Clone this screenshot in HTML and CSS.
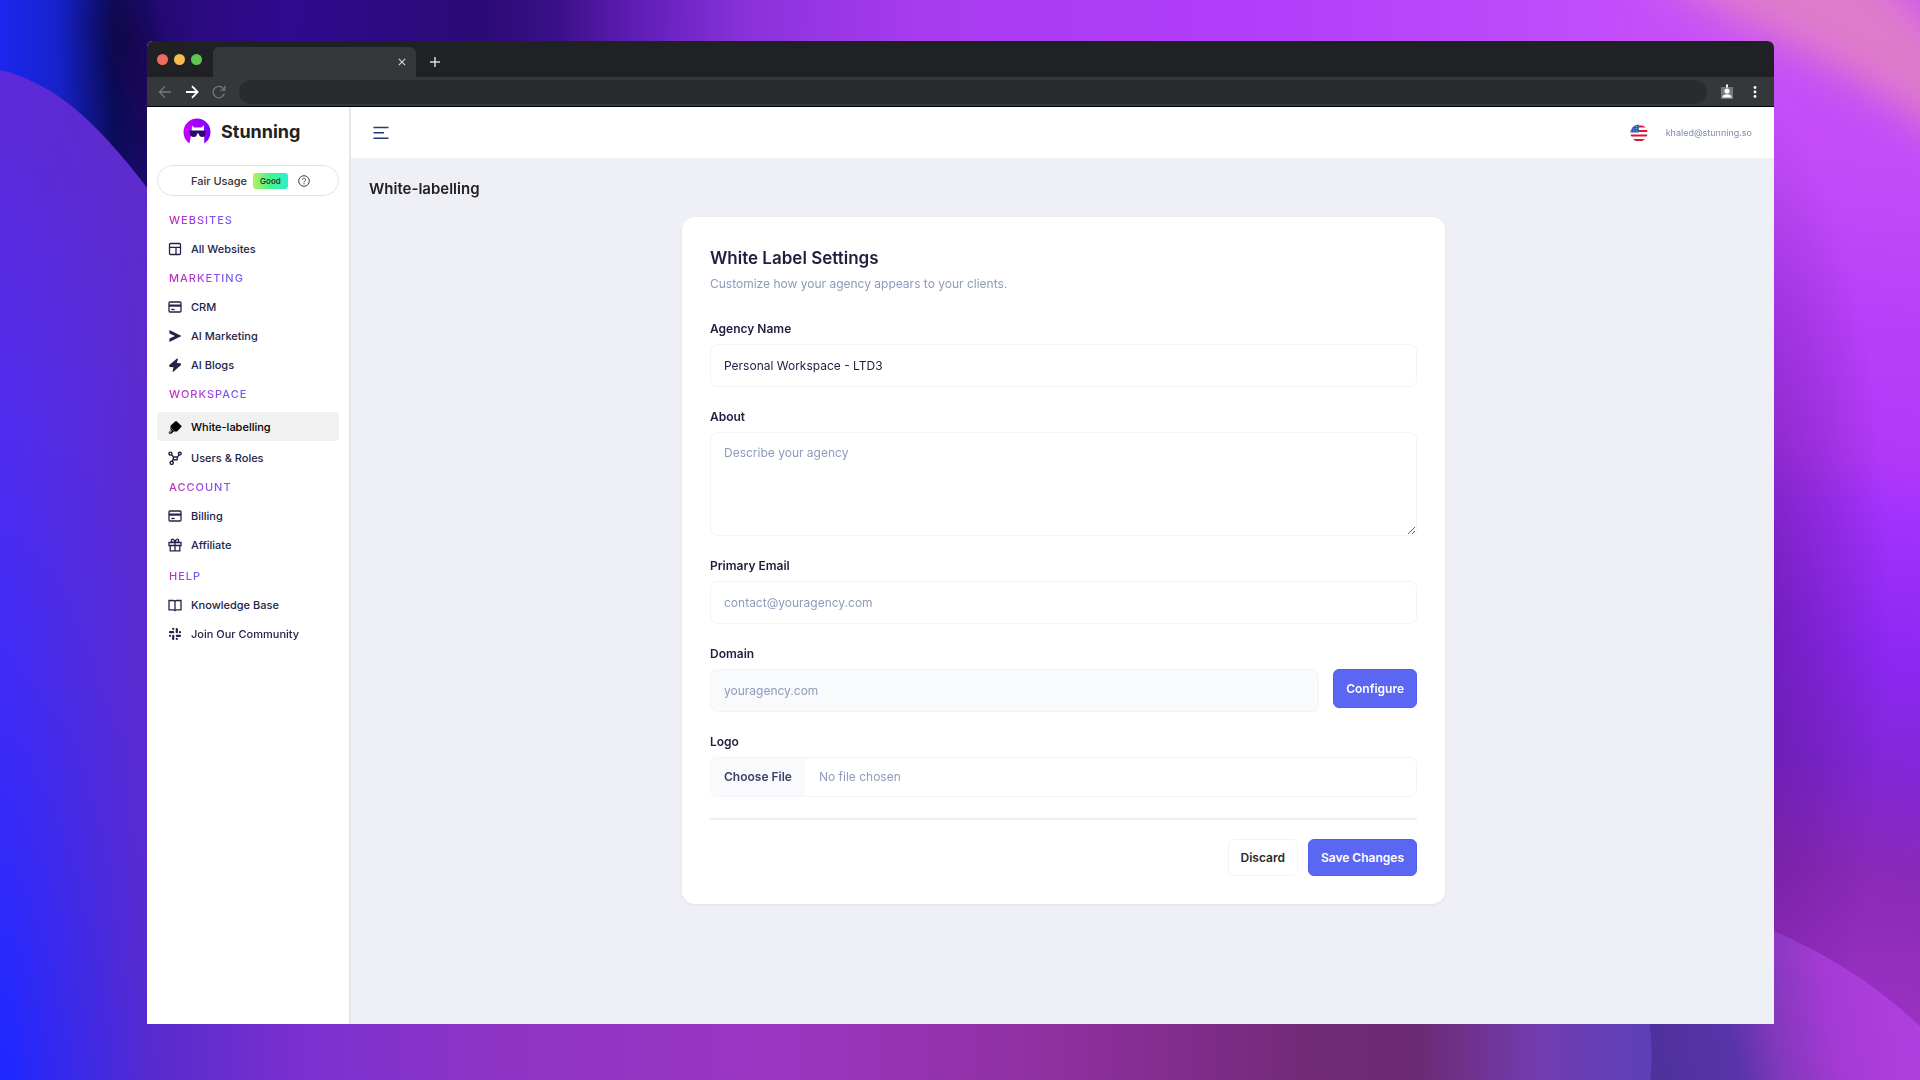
FILE: index.html
```html
<!DOCTYPE html>
<html lang="en">
<head>
    <meta charset="UTF-8">
    <meta name="viewport" content="width=device-width, initial-scale=1.0">
    <title>White-labelling - Stunning</title>
    <link rel="stylesheet" href="styles.css">
</head>
<body>
    <svg class="wallpaper" viewBox="0 0 1920 1080" preserveAspectRatio="none" aria-hidden="true">
        <defs>
            <linearGradient id="wpTop" gradientUnits="userSpaceOnUse" x1="0" y1="0" x2="1920" y2="20">
                <stop offset="0" stop-color="#1c27ee"/>
                <stop offset=".03" stop-color="#1722cc"/>
                <stop offset=".06" stop-color="#0d0d60"/>
                <stop offset=".085" stop-color="#280a78"/>
                <stop offset=".15" stop-color="#300a90"/>
                <stop offset=".25" stop-color="#2a0a74"/>
                <stop offset=".29" stop-color="#3a1088"/>
                <stop offset=".33" stop-color="#5e1db5"/>
                <stop offset=".39" stop-color="#8a32dc"/>
                <stop offset=".48" stop-color="#a83bf0"/>
                <stop offset=".65" stop-color="#b23dfb"/>
                <stop offset=".82" stop-color="#c04cfb"/>
                <stop offset=".9" stop-color="#c852f6"/>
            </linearGradient>
            <linearGradient id="wpRight" gradientUnits="userSpaceOnUse" x1="1900" y1="0" x2="1760" y2="1080">
                <stop offset="0" stop-color="#c852f6"/>
                <stop offset=".17" stop-color="#c24bf8"/>
                <stop offset=".3" stop-color="#b83ffa"/>
                <stop offset=".42" stop-color="#b238f8"/>
                <stop offset=".47" stop-color="#a232fc"/>
                <stop offset=".6" stop-color="#8c28f2"/>
                <stop offset=".7" stop-color="#8227d8"/>
                <stop offset=".8" stop-color="#8a2ab8"/>
                <stop offset="1" stop-color="#a234c8"/>
            </linearGradient>
            <radialGradient id="wpShade">
                <stop offset="0" stop-color="#501080" stop-opacity=".6"/>
                <stop offset="1" stop-color="#501080" stop-opacity="0"/>
            </radialGradient>
            <linearGradient id="wpLeft" gradientUnits="userSpaceOnUse" x1="0" y1="130" x2="40" y2="1080">
                <stop offset="0" stop-color="#5c2ad8"/>
                <stop offset=".3" stop-color="#502cee"/>
                <stop offset=".6" stop-color="#3f2bf6"/>
                <stop offset="1" stop-color="#1f28ff"/>
            </linearGradient>
            <linearGradient id="wpLeftShade" gradientUnits="userSpaceOnUse" x1="10" y1="0" x2="155" y2="0">
                <stop offset="0" stop-color="#5f2bc8" stop-opacity="0"/>
                <stop offset="1" stop-color="#5f2bc8" stop-opacity=".9"/>
            </linearGradient>
            <linearGradient id="wpBottom" gradientUnits="userSpaceOnUse" x1="0" y1="0" x2="1920" y2="0">
                <stop offset="0" stop-color="#592bce"/>
                <stop offset=".083" stop-color="#592bce"/>
                <stop offset=".16" stop-color="#7c30d0"/>
                <stop offset=".25" stop-color="#8c34c6"/>
                <stop offset=".4" stop-color="#9b36c2"/>
                <stop offset=".55" stop-color="#8f30a0"/>
                <stop offset=".68" stop-color="#722a78"/>
                <stop offset=".74" stop-color="#6d2a74"/>
                <stop offset=".8" stop-color="#713cb0"/>
                <stop offset=".858" stop-color="#5e40b8"/>
                <stop offset=".9" stop-color="#4b2c90"/>
            </linearGradient>
            <linearGradient id="wpBlob" gradientUnits="userSpaceOnUse" x1="1640" y1="1060" x2="1920" y2="1010">
                <stop offset="0" stop-color="#4d319a"/>
                <stop offset=".33" stop-color="#5834a8"/>
                <stop offset=".48" stop-color="#8238bc"/>
                <stop offset=".7" stop-color="#a63ad6"/>
                <stop offset="1" stop-color="#b23fe0"/>
            </linearGradient>
            <filter id="wpSoft" x="-60%" y="-60%" width="220%" height="220%">
                <feGaussianBlur stdDeviation="20"/>
            </filter>
        </defs>
        <rect width="1920" height="1080" fill="url(#wpTop)"/>
        <path d="M1760 0H1920V1080H1760Z" fill="url(#wpRight)"/>
        <ellipse cx="1730" cy="620" rx="160" ry="540" fill="url(#wpShade)"/>
        <path d="M1640-40C1740 30 1850 60 1960 150L1970 60C1930 20 1900-10 1860-50Z" fill="#e07cca" filter="url(#wpSoft)"/>
        <path d="M0 1000H1774V1080H0Z" fill="url(#wpBottom)"/>
        <path d="M1650 1080Q1655 1050 1646 1000L1700 905C1770 925 1850 960 1920 1026V1080Z" fill="url(#wpBlob)"/>
        <path d="M95 0H140C155 60 160 120 165 220C145 160 115 90 95 0Z" fill="#080628" opacity=".5" filter="url(#wpSoft)"/>
        <path d="M0 70C60 85 100 125 160 205V1080H0Z" fill="url(#wpLeft)"/>
        <path d="M0 70C60 85 100 125 160 205V1080H0Z" fill="url(#wpLeftShade)"/>
    </svg>

    <div class="browser">
        <div class="tab-bar">
            <div class="lights">
                <span class="light red"></span>
                <span class="light yellow"></span>
                <span class="light green"></span>
            </div>
            <div class="tab">
                <button class="chrome-btn" type="button" aria-label="Close tab">
                    <svg width="8" height="8" viewBox="0 0 8 8" fill="none" stroke="#d5d7d9" stroke-width="1.100"><path d="M.8.8l6.4 6.4M7.2.8L.8 7.2"/></svg>
                </button>
            </div>
            <button class="chrome-btn new-tab" type="button" aria-label="New tab">
                <svg width="10" height="10" viewBox="0 0 10 10" fill="none" stroke="#d5d7d9" stroke-width="1.5"><path d="M5 0v10M0 5h10"/></svg>
            </button>
        </div>
        <div class="toolbar">
            <button class="chrome-btn" type="button" aria-label="Back">
                <svg width="14" height="14" viewBox="0 0 14 14" fill="none" stroke="#75797c" stroke-width="1.3"><path d="M13 7H1.8M7 1.4L1.4 7 7 12.6"/></svg>
            </button>
            <button class="chrome-btn" type="button" aria-label="Forward">
                <svg width="14" height="14" viewBox="0 0 14 14" fill="none" stroke="#fff" stroke-width="1.8"><path d="M1 7h11M7 1.2L12.6 7 7 12.8"/></svg>
            </button>
            <button class="chrome-btn" type="button" aria-label="Reload">
                <svg width="14" height="14" viewBox="0 0 14 14" fill="none" stroke="#75797c" stroke-width="1.3"><path d="M12.4 8.4A5.7 5.7 0 1 1 11.2 3.4L12.8 5M12.8.8V5.2H8.4"/></svg>
            </button>
            <input class="address" type="text" aria-label="Address">
            <button class="chrome-btn" type="button" aria-label="Profile">
                <svg width="14" height="16" viewBox="0 0 14 16"><path fill="#75797c" d="M1 3h12v12H1z"/><path fill="#fff" d="M6 .5h2v3H6z"/><circle cx="7" cy="7" r="2.600" fill="#fff"/><path fill="#fff" d="M2.300 13.500c.2-2.200 2-3.200 4.700-3.200s4.500 1 4.700 3.200z"/></svg>
            </button>
            <button class="chrome-btn" type="button" aria-label="Menu">
                <svg width="4" height="14" viewBox="0 0 4 14" fill="#fff"><circle cx="2" cy="2.500" r="1.400"/><circle cx="2" cy="7" r="1.400"/><circle cx="2" cy="11.500" r="1.400"/></svg>
            </button>
        </div>

        <div class="app">
            <aside class="sidebar">
                <a class="brand" href="#">
                    <svg width="28" height="28" viewBox="0 0 28 28">
                        <defs>
                            <linearGradient id="brandGrad" x1="0" y1="0" x2="1" y2="0">
                                <stop offset="0" stop-color="#c800ff"/>
                                <stop offset="1" stop-color="#7a00ff"/>
                            </linearGradient>
                        </defs>
                        <path fill="url(#brandGrad)" d="M14 .5A13.500 13.500 0 0 0 .5 14c0 4.900 2.400 9 6 11.500L9 19h12v6.500c4-2.300 6.500-6.500 6.500-11.500A13.500 13.500 0 0 0 14 .5z"/>
                        <path fill="#fff" d="M9 7.500l2 2h7.500l2.300-2.500.4 7.500v12h-2l-.4-5.500h-8L8 26l-1.500-.800L8.600 14z"/>
                        <path fill="#2a0a6b" d="M6.500 12.500h16v2.200c0 3.300-1 4.300-3.200 4.300-2 0-3.300-1-3.600-3.500h-1.500c-.3 2.500-1.300 3.500-3.500 3.500-2.500 0-3.600-1.400-3.700-4.200z"/>
                    </svg>
                    <span>Stunning</span>
                </a>
                <div class="usage">
                    <span>Fair Usage</span>
                    <span class="badge">Good</span>
                    <svg width="12" height="12" viewBox="0 0 12 12" fill="none" stroke="#3f4254"><circle cx="6" cy="6" r="5.300"/><path d="M4.400 4.800a1.600 1.600 0 1 1 2.400 1.400c-.6.300-.8.500-.8 1.100M6 8.200v1.100"/></svg>
                </div>
                <nav>
                    <h2 class="nav-title"><span>WEBSITES</span></h2>
                    <a class="nav-item" href="#">
                        <svg viewBox="0 0 14 14" fill="none" stroke="currentColor" stroke-width="1.300"><rect x="1.500" y="1.500" width="11" height="11" rx="1"/><path d="M1.500 5.300h11M8 5.300v7.200"/></svg>
                        All Websites
                    </a>
                    <h2 class="nav-title"><span>MARKETING</span></h2>
                    <a class="nav-item" href="#">
                        <svg viewBox="0 0 14 14" fill="none" stroke="currentColor" stroke-width="1.300"><rect x="1" y="2" width="12" height="10" rx="1"/><path d="M1 5.600h12" stroke-width="2.200"/><path d="M3.200 9.500h3.500"/></svg>
                        CRM
                    </a>
                    <a class="nav-item" href="#">
                        <svg viewBox="0 0 14 14" fill="currentColor"><path d="M1.300 1L13.500 7 1.300 13l.2-3.500L7 7 1.500 4.500z"/></svg>
                        AI Marketing
                    </a>
                    <a class="nav-item" href="#">
                        <svg viewBox="0 0 14 14" fill="currentColor"><path d="M9 .4L1 7.300l.6 1.600 4 .3-1.200 4.300 1 .3 7.800-7-.6-1.600-3.800-.3L10 1z"/></svg>
                        AI Blogs
                    </a>
                    <h2 class="nav-title"><span>WORKSPACE</span></h2>
                    <a class="nav-item active" href="#">
                        <svg viewBox="0 0 14 14" fill="currentColor"><path d="M7.300 1.200a1 1 0 0 1 1.300 0l4.700 4.600a1 1 0 0 1 0 1.300L9 11.500H6.600L2.500 7.300V5.700z"/><path d="M2.300 7.500l4 4-1.300.6-1.200 1.400L1 13.800.7 12l2-1.200z"/><path d="M1.500 12.700l2.400-2" stroke="#f1f1f1" stroke-width=".9"/></svg>
                        White-labelling
                    </a>
                    <a class="nav-item" href="#">
                        <svg viewBox="0 0 14 14" fill="none" stroke="currentColor" stroke-width="1.400"><circle cx="2.400" cy="2.600" r="1.500"/><circle cx="11.800" cy="2.600" r="1.400"/><circle cx="3.700" cy="11.800" r="1.600"/><path d="M3.500 3.800L5.600 6l4-.2 1.400-1.900M5.600 6L5 8.500l-.8 1.800M9.600 5.800L9 8.800 5 8.500"/></svg>
                        Users &amp; Roles
                    </a>
                    <h2 class="nav-title"><span>ACCOUNT</span></h2>
                    <a class="nav-item" href="#">
                        <svg viewBox="0 0 14 14" fill="none" stroke="currentColor" stroke-width="1.300"><rect x="1" y="2" width="12" height="10" rx="1"/><path d="M1 5.600h12" stroke-width="2.200"/><path d="M3.200 9.500h3.500"/></svg>
                        Billing
                    </a>
                    <a class="nav-item" href="#">
                        <svg viewBox="0 0 14 14" fill="none" stroke="currentColor" stroke-width="1.300"><path d="M1 4.500h12v3H1zM2.200 7.500v5.300h9.600V7.500M7 4.500v8.300M7 4.500C3.800 4.400 3 3.400 3.300 2.200 3.800.4 6.500.8 7 4.500 7.500.8 10.200.4 10.700 2.200c.3 1.200-.5 2.200-3.700 2.300z"/></svg>
                        Affiliate
                    </a>
                    <div class="help">
                        <h2 class="nav-title"><span>HELP</span></h2>
                        <a class="nav-item" href="#">
                            <svg viewBox="0 0 14 14" fill="none" stroke="currentColor" stroke-width="1.300"><path d="M1 2.500h4.500c1 0 1.500.6 1.500 1.500 0-.9.500-1.500 1.500-1.500H13v9.300H8.300c-.8 0-1.300.4-1.300 1.400 0-1-.5-1.400-1.300-1.400H1zM7 4v9"/></svg>
                            Knowledge Base
                        </a>
                        <a class="nav-item" href="#">
                            <svg viewBox="0 0 14 14" fill="none" stroke="currentColor" stroke-width="2.200" stroke-linecap="round"><path d="M5.200 1.900v.1M5.200 5.200H2M8.800 2v3.200M12 5.200h-.1M8.800 8.800H12M8.800 12v-.1M5.200 8.800V12M2 8.800h.1"/></svg>
                            Join Our Community
                        </a>
                    </div>
                </nav>
            </aside>

            <div class="main">
                <header class="header">
                    <button class="chrome-btn" type="button" aria-label="Toggle sidebar">
                        <svg width="16" height="14" viewBox="0 0 16 14" fill="none" stroke="#233876" stroke-width="1.400"><path d="M.5 1.500h15M.5 6.800h10.500M.5 12.200h15"/></svg>
                    </button>
                    <div class="account">
                        <svg width="18" height="18" viewBox="0 0 18 18">
                            <defs><clipPath id="flag"><circle cx="9" cy="9" r="8.600"/></clipPath></defs>
                            <g clip-path="url(#flag)">
                                <path fill="#fff" d="M0 0h18v18H0z"/>
                                <path stroke="#e3122f" stroke-width="2" d="M0 2.500h18M0 7h18M0 11.500h18M0 16h18"/>
                                <path fill="#2d5db5" d="M0 0h9v8.500H0z"/>
                                <path stroke="#b9cdf0" stroke-width=".7" stroke-dasharray="1 1.500" d="M1 2.500h8M1 4.700h8M1 6.900h8"/>
                            </g>
                        </svg>
                        <span>khaled@stunning.so</span>
                    </div>
                </header>

                <main class="content">
                    <h1>White-labelling</h1>
                    <form class="card">
                        <h2>White Label Settings</h2>
                        <p class="sub">Customize how your agency appears to your clients.</p>

                        <div class="field">
                            <label for="agencyName">Agency Name</label>
                            <input class="control" id="agencyName" type="text" value="Personal Workspace - LTD3">
                        </div>
                        <div class="field">
                            <label for="about">About</label>
                            <textarea class="control" id="about" placeholder="Describe your agency"></textarea>
                        </div>
                        <div class="field">
                            <label for="email">Primary Email</label>
                            <input class="control" id="email" type="email" placeholder="contact@youragency.com">
                        </div>
                        <div class="field">
                            <label for="domain">Domain</label>
                            <div class="row">
                                <input class="control" id="domain" type="text" placeholder="youragency.com" readonly>
                                <button class="btn primary configure" type="button">Configure</button>
                            </div>
                        </div>
                        <div class="field">
                            <label for="logo">Logo</label>
                            <input class="control file" id="logo" type="file">
                        </div>

                        <div class="actions">
                            <button class="btn" type="reset">Discard</button>
                            <button class="btn primary" type="submit">Save Changes</button>
                        </div>
                    </form>
                </main>
            </div>
        </div>
    </div>
</body>
</html>
```
FILE: styles.css
```css
*{
    margin: 0;
    padding: 0;
    box-sizing: border-box;
}
body{
    display: flex;
    min-height: 100vh;
    padding: 41px 146px 56px 147px;
    font-family: Inter, "Liberation Sans", sans-serif;
    font-size: 12px;
    line-height: 16px;
    color: #1e1e3f;
}
.wallpaper{
    position: fixed;
    top: 0;
    left: 0;
    width: 100%;
    height: 100%;
    z-index: -1;
}
a{
    color: inherit;
    text-decoration: none;
}
svg{
    display: block;
    flex: none;
}
button,
input,
textarea{
    font: inherit;
    color: inherit;
}

/* browser window */
.browser{
    flex: 1;
    display: flex;
    flex-direction: column;
    border-radius: 6px 6px 0 0;
    overflow: hidden;
    background: #fff;
}
.chrome-btn{
    display: flex;
    border: 0;
    background: none;
}
.tab-bar{
    display: flex;
    align-items: flex-end;
    height: 36px;
    background: #202124;
}
.lights{
    display: flex;
    align-self: center;
    gap: 6px;
    padding: 0 11px 0 10px;
}
.light{
    width: 11px;
    height: 11px;
    border-radius: 50%;
}
.red{
    background: #ee6a5f;
}
.yellow{
    background: #f5bd4f;
}
.green{
    background: #61c454;
}
.tab{
    display: flex;
    align-items: center;
    justify-content: flex-end;
    width: 203px;
    height: 30px;
    padding-right: 10px;
    border-radius: 6px 6px 0 0;
    background: #35383b;
}
.new-tab{
    padding: 10px 14px;
}
.toolbar{
    display: flex;
    align-items: center;
    gap: 13px;
    height: 30px;
    padding: 0 17px 0 11px;
    border-bottom: 1px solid #000;
    background: #35383b;
}
.address{
    flex: 1;
    height: 24px;
    padding: 0 12px;
    border: 0;
    border-radius: 12px;
    background: #292c2f;
    color: #e8eaed;
}
.toolbar .address + .chrome-btn{
    margin-right: 6px;
}

/* sidebar */
.app{
    flex: 1;
    display: flex;
}
.sidebar{
    flex: none;
    width: 204px;
    padding: 0 10px;
    border-right: 2px solid #e6e7ec;
}
.brand{
    display: flex;
    align-items: center;
    gap: 10px;
    padding: 11px 0 19px 26px;
    font-size: 18px;
    font-weight: 700;
    line-height: 28px;
    color: #222;
}
.usage{
    display: flex;
    align-items: center;
    height: 31px;
    padding-left: 33px;
    margin-bottom: 9px;
    border: 1px solid #dfe2e8;
    border-radius: 16px;
    font-weight: 500;
    font-size: 11px;
    color: #333;
}
.badge{
    margin: 0 10px 0 6px;
    padding: 0 7px;
    border-radius: 3px;
    font-size: 8px;
    font-weight: 600;
    background: linear-gradient(90deg, #b5f05c, #45f58b 50%, #2cf0cd);
}
.nav-title{
    height: 29px;
    padding-left: 12px;
    font-size: 11px;
    font-weight: 500;
    line-height: 30px;
    letter-spacing: 1px;
}
.nav-title span{
    background: linear-gradient(90deg, #c22db4, #a044e0 50%, #5b62f8);
    -webkit-background-clip: text;
    background-clip: text;
    color: transparent;
}
.nav-item{
    display: flex;
    align-items: center;
    gap: 9px;
    height: 29px;
    padding-left: 11px;
    border-radius: 4px;
    font-size: 11px;
    font-weight: 500;
    color: #23234a;
}
.nav-item svg{
    width: 14px;
    height: 14px;
}
.nav-item.active{
    margin: 4px 0 2px;
    background: #f1f1f1;
    color: #000;
}
.help{
    padding-top: 2px;
}

/* main area */
.main{
    flex: 1;
    display: flex;
    flex-direction: column;
    background: #eff0f6;
}
.header{
    display: flex;
    align-items: center;
    justify-content: space-between;
    height: 51px;
    padding: 0 22px;
    background: #fff;
}
.account{
    display: flex;
    align-items: center;
    gap: 18px;
    font-size: 9px;
    color: #7e8bb0;
}
.content{
    padding: 21px 16px 21px 18px;
}
.content h1{
    margin-bottom: 18px;
    font-size: 15px;
    font-weight: 600;
    line-height: 20px;
    color: #222;
}
.card{
    max-width: 763px;
    margin: 0 auto;
    padding: 28px;
    border-radius: 13px;
    background: #fff;
    box-shadow: 0 1px 3px rgba(30, 30, 80, .08);
}
.card h2{
    font-size: 17px;
    font-weight: 600;
    line-height: 26px;
}
.sub{
    margin: 4px 0 27px;
    line-height: 18px;
    color: #8f9bba;
}
.field{
    margin-bottom: 21px;
}
.field label{
    display: block;
    margin-bottom: 6px;
    font-weight: 600;
    line-height: 18px;
}
.control{
    display: block;
    width: 100%;
    height: 43px;
    padding: 12px 13px;
    border: 1px solid #f3f4f8;
    border-radius: 7px;
    background: #fff;
}
.control::placeholder{
    color: #8f9bba;
}
textarea.control{
    height: 104px;
    resize: vertical;
}
.control[readonly]{
    background: #f9fafc;
}
.row{
    display: flex;
    align-items: flex-start;
    gap: 14px;
}
.file{
    height: 40px;
    padding: 0;
    line-height: 38px;
    color: #8f9bba;
}
.file::file-selector-button{
    height: 38px;
    margin-right: 14px;
    padding: 0 13px;
    border: 0;
    background: #f9fafc;
    font: inherit;
    font-weight: 600;
    color: #3b3f63;
}
.actions{
    display: flex;
    justify-content: flex-end;
    gap: 10px;
    padding-top: 19px;
    border-top: 2px solid #eeeff2;
}
.btn{
    height: 37px;
    padding: 0 12px;
    border: 1px solid #f3f3f5;
    border-radius: 6px;
    background: #fff;
    font-weight: 600;
    color: #2a2a2a;
}
.primary{
    border-color: #4f5cf0;
    background: #5b66f2;
    color: #fff;
}
.configure{
    height: 39px;
}
```
